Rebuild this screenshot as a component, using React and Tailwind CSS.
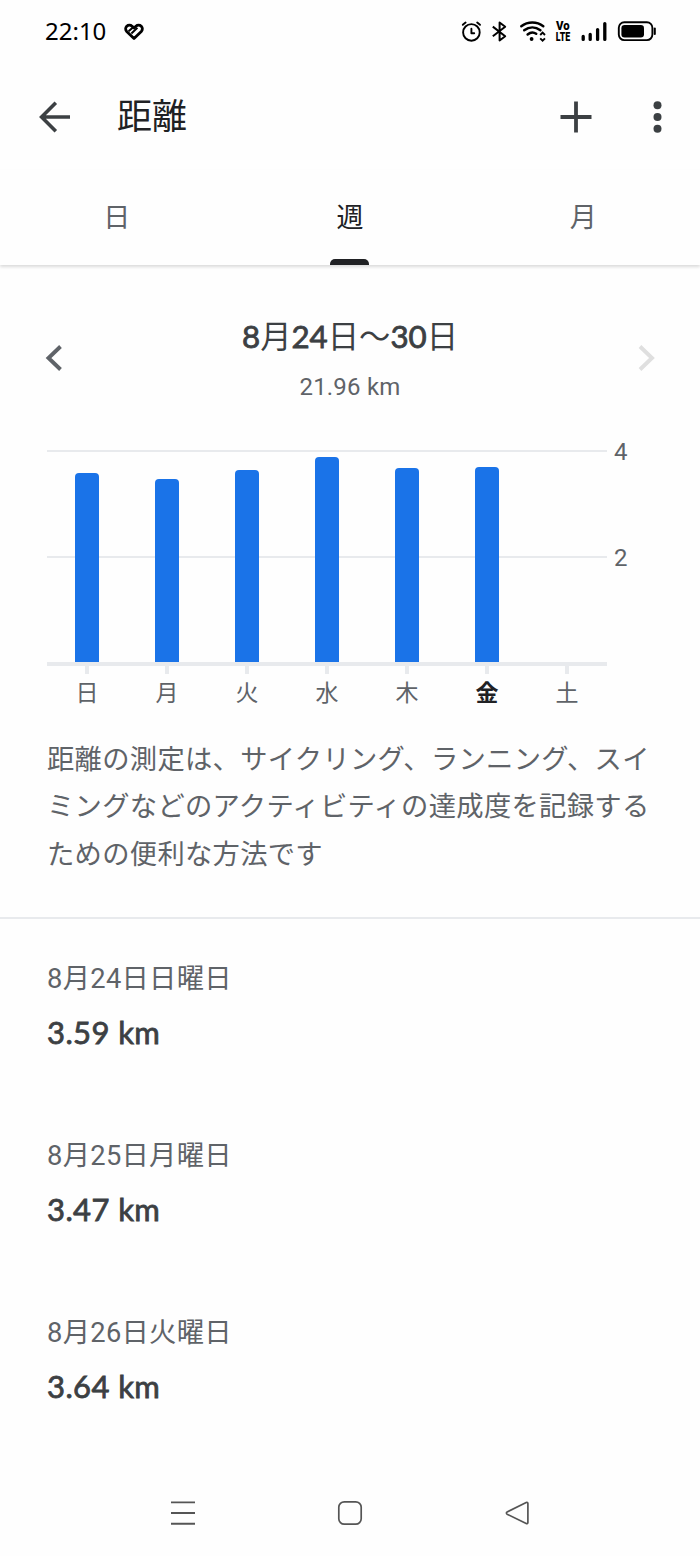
import React from "react";
import clsx from "clsx";

const MAX_KM = 4;
const PLOT_HEIGHT = 211;

const week = [
  { day: "日", km: 3.59 },
  { day: "月", km: 3.47 },
  { day: "火", km: 3.64 },
  { day: "水", km: 3.88 },
  { day: "木", km: 3.68 },
  { day: "金", km: 3.7, today: true },
  { day: "土", km: 0 },
];

const entries = [
  { date: "8月24日日曜日", value: "3.59 km" },
  { date: "8月25日月曜日", value: "3.47 km" },
  { date: "8月26日火曜日", value: "3.64 km" },
];

const tabs = [
  { label: "日" },
  { label: "週", active: true },
  { label: "月" },
];

const StatusBar = () => (
  <div className="flex h-[62px] items-center justify-between pl-[45px] pr-[43px] text-black">
    <div className="flex items-center gap-[18px]">
      <span className="font-['Noto_Sans',sans-serif] text-[24px] leading-none">
        22:10
      </span>
      <svg className="mt-px" width="20" height="18" viewBox="0 0 20 18" fill="none" stroke="currentColor" strokeWidth="2.8" strokeLinejoin="round">
        <path d="M10 15.4 2.7 8.4a3.7 3.7 0 0 1 0-5.2 3.9 3.9 0 0 1 5.4 0L10 5l1.9-1.8a3.9 3.9 0 0 1 5.4 0 3.7 3.7 0 0 1 0 5.2Z" />
        <path d="M4.6 8.2 10 3.4M7.4 10.4l6-5.6" strokeWidth="2" />
      </svg>
    </div>

    {/* one drawing for the whole indicator strip */}
    <svg width="196" height="24" viewBox="461 19 196 24" fill="none" stroke="currentColor">
      <g strokeWidth="1.9" strokeLinecap="round" strokeLinejoin="round">
        <circle cx="471.4" cy="32.4" r="8.3" />
        <path d="M471.4 28.8v4.4h2.8" />
        <path d="m462.8 24.8 2.8-2.2M480 24.8l-2.8-2.2" />
      </g>
      <path d="m492.8 26.6 12.4 9.6-5.6 4.3v-18l5.6 4.2-12.4 9.6" strokeWidth="2" strokeLinejoin="round" />
      <g strokeWidth="2.5" strokeLinecap="round">
        <path d="M521.3 26.2c6.6-5 15.5-5 22 0" />
        <path d="M524.2 30.3c5-3.8 11.3-3.8 16.2 0" />
        <path d="M527.6 34.5c2.7-2.2 6.1-2.4 8.6-.7" />
      </g>
      <circle cx="531.6" cy="39" r="1.9" fill="currentColor" stroke="none" />
      <path d="m540.2 35 2.4-2.4L545 35M540.2 38.3l2.4 2.4 2.4-2.4" strokeWidth="1.9" />
      <g fill="currentColor" stroke="none" className="font-['Roboto',sans-serif] text-[12px] font-black">
        <text x="556" y="30.2" textLength="13.6" lengthAdjust="spacingAndGlyphs">Vo</text>
        <text x="555.8" y="41.2" textLength="14.4" lengthAdjust="spacingAndGlyphs">LTE</text>
      </g>
      <path d="M583.2 39.4v-3M590.2 39.4v-5M597.6 39.4V29.6M604.8 39.4V23.6" strokeWidth="3.3" strokeLinecap="round" />
      <rect x="618.8" y="22.3" width="33.6" height="17.8" rx="5.5" strokeWidth="1.9" />
      <rect x="621.4" y="25" width="22.6" height="12.4" rx="3.2" fill="currentColor" stroke="none" />
      <path d="M654.8 28.6v5.4" strokeWidth="2" strokeLinecap="round" />
    </svg>
  </div>
);

const AppBar = () => (
  <header className="flex h-[108px] items-center pl-[39px] pr-[38px] pt-[2px] text-[#3c4043]">
    <svg width="32" height="32" viewBox="0 0 32 32" fill="none" stroke="currentColor" strokeWidth="3.6">
      <path d="M31 16H3M16.8 1.8 2.6 16l14.2 14.2" />
    </svg>
    <h1 className="ml-[46px] flex-1 pt-[2px] text-[35px] leading-[44px] text-[#202124]">距離</h1>
    <svg width="32" height="32" viewBox="0 0 32 32" fill="none" stroke="currentColor" strokeWidth="3.8">
      <path d="M16 .5v31M.5 16h31" />
    </svg>
    <svg className="ml-[61px]" width="9" height="32" viewBox="0 0 9 32" fill="currentColor">
      <circle cx="4.5" cy="4.3" r="4" />
      <circle cx="4.5" cy="16" r="4" />
      <circle cx="4.5" cy="27.7" r="4" />
    </svg>
  </header>
);

const Tabs = () => (
  <nav className="grid h-[95px] grid-cols-3 shadow-[0_2px_3px_rgba(0,0,0,0.14)]">
    {tabs.map((tab) => (
      <div
        key={tab.label}
        className={clsx(
          "flex flex-col items-center justify-between pt-[29px] text-[27px] leading-[38px]",
          tab.active ? "text-[#202124]" : "text-[#5f6368]"
        )}
      >
        {tab.label}
        {tab.active && <span className="h-[6px] w-[39px] rounded-t-[5px] bg-[#202124]" />}
      </div>
    ))}
  </nav>
);

const WeekPicker = () => (
  <div className="flex items-center justify-between pl-[45px] pr-[45px] pt-[50px]">
    <svg className="mb-[2px]" width="17" height="26" viewBox="0 0 17 26" fill="none" stroke="#5f6368" strokeWidth="3.9">
      <path d="M15.5 1.5 3.5 13l12 11.5" />
    </svg>
    <div className="flex flex-col items-center">
      <h2 className="font-['Lato','Noto_Sans_CJK_JP',sans-serif] text-[31.3px] leading-[42px] text-[#3c4043]">
        <span className="[-webkit-text-stroke:0.8px]">8</span>月
        <span className="[-webkit-text-stroke:0.8px]">24</span>日〜
        <span className="[-webkit-text-stroke:0.8px]">30</span>日
      </h2>
      <p className="mt-[14px] text-[24px] leading-[32px] tracking-[0.2px] text-[#5f6368]">
        21.96 km
      </p>
    </div>
    <svg className="mb-[2px]" width="17" height="26" viewBox="0 0 17 26" fill="none" stroke="#dfdfdf" strokeWidth="3.9">
      <path d="m2 1.5 12 11.5L2 24.5" />
    </svg>
  </div>
);

const Chart = () => (
  <div className="mt-[47px] flex pl-[47px]">
    <div className="w-[560px]">
      <div className="grid h-[216px] border-b-4 border-[#e8eaed]">
        {/* grid lines and bars share the same cell */}
        <div className="col-start-1 row-start-1">
          <div className="h-[106px] border-t-2 border-[#e8eaed]" />
          <div className="h-[106px] border-t-2 border-[#e8eaed]" />
        </div>
        <div className="col-start-1 row-start-1 grid grid-cols-7 items-end justify-items-center">
          {week.map((d) => (
            <div
              key={d.day}
              className="w-[24px] rounded-t-[4px] bg-[#1a73e8]"
              style={{ height: (d.km / MAX_KM) * PLOT_HEIGHT }}
            />
          ))}
        </div>
      </div>
      <div className="grid grid-cols-7">
        {week.map((d) => (
          <div key={d.day} className="flex flex-col items-center">
            <span className="h-[8px] w-[4px] bg-[#e8eaed]" />
            <span
              className={clsx(
                "mt-[4px] text-[23px] leading-[32px]",
                d.today ? "font-bold text-[#202124]" : "text-[#5f6368]"
              )}
            >
              {d.day}
            </span>
          </div>
        ))}
      </div>
    </div>
    <div className="-mt-[14px] ml-[7px] text-[24px] leading-[32px] text-[#5f6368]">
      <div className="h-[106px]">4</div>
      <div>2</div>
    </div>
  </div>
);

const NavBar = () => (
  <footer className="mt-auto flex h-[86px] items-center justify-between pl-[170px] pr-[170px]">
    <svg width="26" height="26" viewBox="0 0 26 26" stroke="#555" strokeWidth="1.9">
      <path d="M1 2.4h24M1 13h24M1 23.7h24" />
    </svg>
    <svg width="26" height="26" viewBox="0 0 26 26" fill="none" stroke="#555" strokeWidth="1.7">
      <rect x="1.8" y="1.8" width="22.4" height="22.4" rx="5.5" />
    </svg>
    <svg width="26" height="26" viewBox="0 0 26 26" fill="none" stroke="#555" strokeWidth="1.7" strokeLinejoin="round">
      <path d="M22.2 2.4 3.1 11.9a1.3 1.3 0 0 0 0 2.3l19.1 9.4a1.2 1.2 0 0 0 1.7-1.1v-19a1.2 1.2 0 0 0-1.7-1.1Z" />
    </svg>
  </footer>
);

const App = () => {
  return (
    <div
      lang="ja"
      className="flex h-[1556px] w-[700px] flex-col overflow-hidden bg-[#fefefe] font-['Roboto','Noto_Sans_CJK_JP',sans-serif]"
    >
      <StatusBar />
      <AppBar />
      <Tabs />
      <WeekPicker />
      <Chart />

      <p className="mt-[27px] border-b-2 border-[#e8eaed] pb-[38px] pl-[47px] text-[27.3px] leading-[47.3px] tracking-[0.3px] text-[#5f6368]">
        距離の測定は、サイクリング、ランニング、スイ
        <br />
        ミングなどのアクティビティの達成度を記録する
        <br />
        ための便利な方法です
      </p>

      <ul className="flex flex-col gap-[75px] pl-[47px] pt-[40px]">
        {entries.map((entry) => (
          <li key={entry.date} className="h-[102px]">
            <p className="text-[27.3px] leading-[40px] tracking-[0.3px] text-[#5f6368]">{entry.date}</p>
            <p className="mt-[13px] font-['Lato',sans-serif] text-[31px] leading-[40px] tracking-[0.4px] text-[#3c4043] [-webkit-text-stroke:0.8px]">
              {entry.value}
            </p>
          </li>
        ))}
      </ul>

      <NavBar />
    </div>
  );
};

export default App;
